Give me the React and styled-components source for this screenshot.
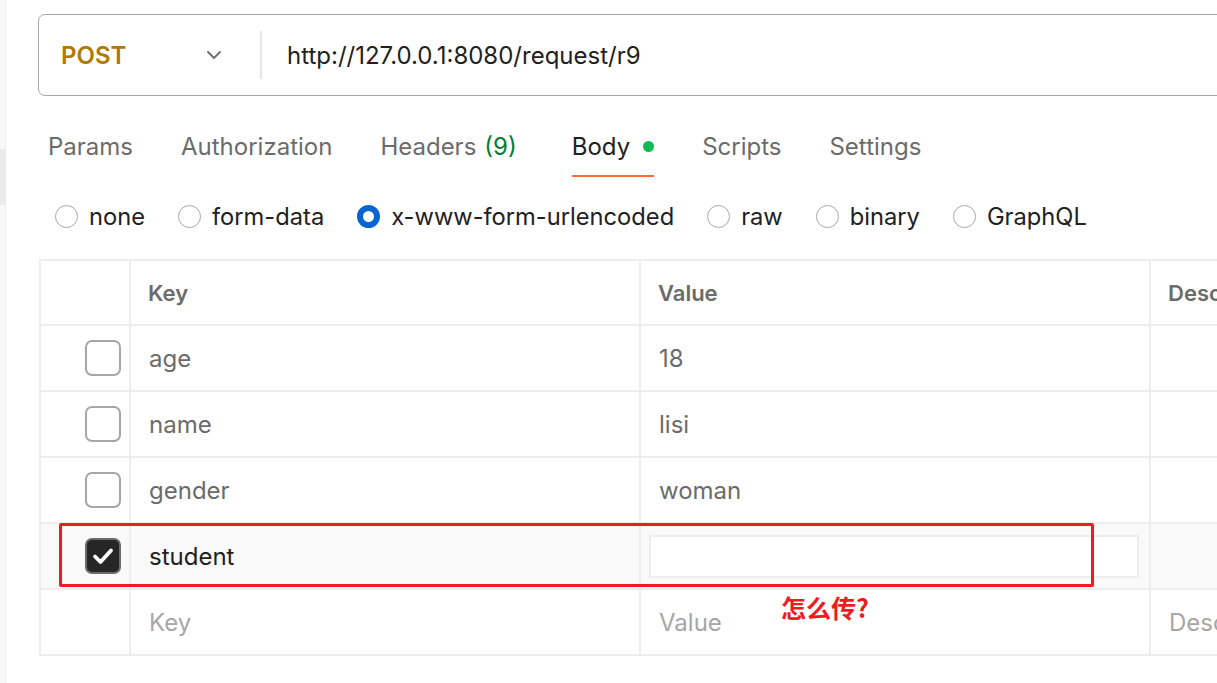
import React from "react";
import styled, { createGlobalStyle } from "styled-components";

const GlobalStyle = createGlobalStyle`
  html, body {
    margin: 0;
    padding: 0;
    background: #ffffff;
    overflow: hidden;
  }
  body {
    font-family: Inter, "Noto Sans", "Noto Sans CJK SC", sans-serif;
    color: #212121;
  }
`;

const tabs = [
  { label: "Params" },
  { label: "Authorization" },
  { label: "Headers", count: 9 },
  { label: "Body", active: true, dot: true },
  { label: "Scripts" },
  { label: "Settings" },
];

const bodyModes = [
  { label: "none" },
  { label: "form-data" },
  { label: "x-www-form-urlencoded", checked: true },
  { label: "raw" },
  { label: "binary" },
  { label: "GraphQL" },
];

const rows = [
  { key: "age", value: "18" },
  { key: "name", value: "lisi" },
  { key: "gender", value: "woman" },
  { key: "student", value: "", checked: true, editing: true },
];

function Chevron() {
  return (
    <svg width="18" height="18" viewBox="0 0 18 18" fill="none">
      <path d="M3 6 L9 12 L15 6" stroke="#6b6b6b" strokeWidth="1.8" strokeLinecap="round" strokeLinejoin="round" />
    </svg>
  );
}

function Check() {
  return (
    <svg width="26" height="26" viewBox="0 0 26 26" fill="none">
      <path d="M5 13.5 L10.5 19 L21 7.5" stroke="#ffffff" strokeWidth="3.8" strokeLinecap="round" strokeLinejoin="round" />
    </svg>
  );
}

function App() {
  return (
    <>
      <GlobalStyle />
      <Page>
        <SideStrip>
          <StripMark />
        </SideStrip>
        <Main>
          <UrlBar>
            <MethodSelect>
              <Method>POST</Method>
              <Chevron />
            </MethodSelect>
            <Divider />
            <Url>http://127.0.0.1:8080/request/r9</Url>
          </UrlBar>

          <TabBar>
            {tabs.map((t) => (
              <Tab key={t.label} $active={t.active}>
                {t.label}
                {t.count != null && <Count>({t.count})</Count>}
                {t.dot && <Dot />}
              </Tab>
            ))}
          </TabBar>

          <RadioRow>
            {bodyModes.map((m) => (
              <RadioItem key={m.label}>
                <Radio $checked={m.checked} />
                {m.label}
              </RadioItem>
            ))}
          </RadioRow>

          <TableWrap>
            <Table>
              <Row $head>
                <CheckCell />
                <HeadCell>Key</HeadCell>
                <HeadCell>Value</HeadCell>
                <HeadCell $last>Description</HeadCell>
              </Row>
              {rows.map((r) => (
                <Row key={r.key} $highlight={r.editing}>
                  <CheckCell>
                    <Box $checked={r.checked}>{r.checked && <Check />}</Box>
                  </CheckCell>
                  <Cell $dark={r.editing}>{r.key}</Cell>
                  <Cell>
                    {r.editing ? <ValueInput /> : r.value}
                  </Cell>
                  <Cell $last />
                </Row>
              ))}
              <Row>
                <CheckCell />
                <Cell $placeholder>Key</Cell>
                <Cell $placeholder>
                  Value
                  <Note>怎么传?</Note>
                </Cell>
                <Cell $placeholder $last>Description</Cell>
              </Row>
            </Table>
            <Annotation />
          </TableWrap>
        </Main>
      </Page>
    </>
  );
}

// Styled Components

const Page = styled.div`
  display: flex;
  width: 1217px;
  height: 683px;
  overflow: hidden;
`;

const SideStrip = styled.div`
  width: 5px;
  flex: none;
  background: #f9f9f9;
  border-right: 1px solid #ececec;
  padding-top: 149px;
`;

const StripMark = styled.div`
  height: 56px;
  background: #ebebeb;
`;

const Main = styled.div`
  flex: 1;
  min-width: 0;
  padding: 14px 0 0 32px;
`;

const UrlBar = styled.div`
  display: flex;
  align-items: center;
  height: 80px;
  width: 1220px;
  border: 1.5px solid #a6a6a6;
  border-radius: 7px;
`;

const MethodSelect = styled.div`
  width: 221px;
  box-sizing: border-box;
  display: flex;
  align-items: center;
  justify-content: space-between;
  padding: 0 37px 0 22px;
`;

const Method = styled.span`
  font-size: 24px;
  font-weight: 600;
  color: #ad7a03;
`;

const Divider = styled.div`
  width: 2px;
  height: 48px;
  background: #e6e6e6;
`;

const Url = styled.div`
  padding-left: 25px;
  font-size: 24px;
  color: #212121;
`;

const TabBar = styled.div`
  display: flex;
  gap: 48px;
  height: 62px;
  margin-top: 19px;
  padding-left: 10px;
`;

const Tab = styled.div`
  display: flex;
  align-items: center;
  gap: 8px;
  height: 100%;
  box-sizing: border-box;
  padding-top: 2px;
  font-size: 24px;
  color: ${(p) => (p.$active ? "#212121" : "#6b6b6b")};
  border-bottom: 2px solid ${(p) => (p.$active ? "#ff6c37" : "transparent")};
  margin-left: ${(p) => (p.$active ? "7px" : "0")};
`;

const Count = styled.span`
  color: #007f31;
`;

const Dot = styled.span`
  width: 11px;
  height: 11px;
  border-radius: 50%;
  background: #0cbb52;
  margin-left: 5px;
`;

const RadioRow = styled.div`
  display: flex;
  align-items: center;
  gap: 33px;
  height: 79px;
  padding-left: 17px;
`;

const RadioItem = styled.label`
  display: flex;
  align-items: center;
  gap: 11px;
  font-size: 23.7px;
  color: #212121;
`;

const Radio = styled.span`
  width: 23px;
  height: 23px;
  box-sizing: border-box;
  border-radius: 50%;
  border: ${(p) => (p.$checked ? "6px solid #0265d2" : "1.5px solid #a6a6a6")};
  background: #ffffff;
`;

const TableWrap = styled.div`
  position: relative;
  margin: 3px 0 0 1px;
`;

const Table = styled.div`
  width: 1260px;
  border-top: 2px solid #ededed;
  border-left: 2px solid #ededed;
`;

const Row = styled.div`
  display: grid;
  grid-template-columns: 90px 510px 510px 1fr;
  height: ${(p) => (p.$head ? "65px" : "66px")};
  background: ${(p) => (p.$highlight ? "#f9f9f9" : "#ffffff")};
  border-bottom: 2px solid #ededed;
  box-sizing: border-box;
`;

const CheckCell = styled.div`
  display: flex;
  align-items: center;
  justify-content: flex-end;
  padding-right: 8px;
  border-right: 2px solid #ededed;
`;

const HeadCell = styled.div`
  display: flex;
  align-items: center;
  padding-left: 17px;
  font-size: 22px;
  font-weight: 600;
  color: #6b6b6b;
  border-right: ${(p) => (p.$last ? "none" : "2px solid #ededed")};
`;

const Cell = styled.div`
  position: relative;
  display: flex;
  align-items: center;
  padding-left: 18px;
  font-size: 24px;
  color: ${(p) => (p.$placeholder ? "#a6a6a6" : p.$dark ? "#212121" : "#6b6b6b")};
  border-right: ${(p) => (p.$last ? "none" : "2px solid #ededed")};
`;

const Box = styled.span`
  width: 36px;
  height: 36px;
  box-sizing: border-box;
  border-radius: 7px;
  display: flex;
  align-items: center;
  justify-content: center;
  border: 2px solid ${(p) => (p.$checked ? "#6b6b6b" : "#a6a6a6")};
  background: ${(p) => (p.$checked ? "#262626" : "#ffffff")};
`;

const ValueInput = styled.div`
  width: 490px;
  height: 43px;
  box-sizing: border-box;
  margin-left: -10px;
  background: #ffffff;
  border: 2px solid #ededed;
`;

const Annotation = styled.div`
  position: absolute;
  left: 20px;
  top: 264px;
  width: 1035px;
  height: 64px;
  box-sizing: border-box;
  border: 3px solid #ed1c24;
  border-radius: 2px;
`;

const Note = styled.span`
  position: absolute;
  left: 140px;
  top: 2px;
  font-family: "Noto Sans CJK SC", sans-serif;
  font-size: 25px;
  font-weight: 700;
  line-height: 1.2;
  color: #ed1c24;
`;

export default App;
